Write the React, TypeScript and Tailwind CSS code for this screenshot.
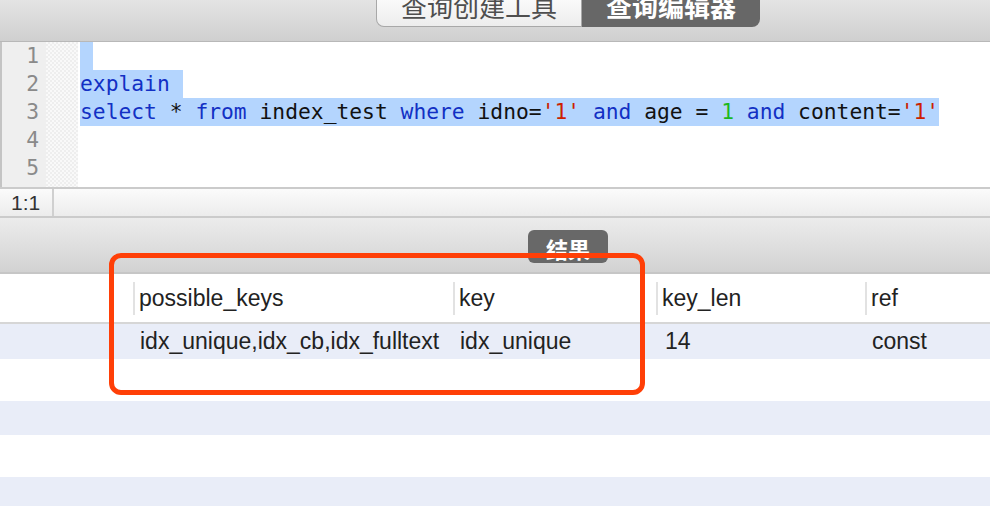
import React from "react";

const KW = "text-[#1230c4]";
const STR = "text-[#cc1f00]";
const NUM = "text-[#1db81d]";

function Line({ children }: { children?: React.ReactNode }) {
  return <div className="h-[28px] leading-[28px] whitespace-pre">{children}</div>;
}

function Sel({ children }: { children: React.ReactNode }) {
  return (
    <span className="inline-block h-[28px] leading-[28px] bg-[#b4d5fe] whitespace-pre align-top">
      {children}
    </span>
  );
}

const cols = [
  { w: "w-[133px]", h: "", v: "", pad: "pl-[7px]" },
  { w: "w-[320px]", h: "possible_keys", v: "idx_unique,idx_cb,idx_fulltext", pad: "pl-[7px]" },
  { w: "w-[203px]", h: "key", v: "idx_unique", pad: "pl-[7px]" },
  { w: "w-[209px]", h: "key_len", v: "14", pad: "pl-[9px]" },
  { w: "flex-1", h: "ref", v: "const", pad: "pl-[7px]" },
];

export default function App() {
  const ui = { fontFamily: '"Liberation Sans", Arial, sans-serif' };
  const cjk = { fontFamily: '"Noto Sans CJK SC", "Liberation Sans", sans-serif' };
  const mono = { fontFamily: '"DejaVu Sans Mono", monospace' };
  return (
    <div className="relative w-[990px] h-[506px] overflow-hidden bg-white" style={ui}>
      {/* top bar with tabs */}
      <div className="h-[42px] bg-gradient-to-b from-[#e4e4e4] to-[#cfcfcf] border-b border-[#b8b8b8] flex">
        <div className="ml-[376px] flex h-[27px]" style={cjk}>
          <div className="w-[206px] h-[27px] overflow-hidden bg-gradient-to-b from-[#fafafa] to-[#ededed] border border-t-0 border-[#a8a8a8] rounded-bl-[8px] flex justify-center">
            <span className="block text-[26px] leading-[26px] -mt-[7px] text-[#4e4e4e]">查询创建工具</span>
          </div>
          <div className="w-[178px] h-[27px] overflow-hidden bg-[#676767] rounded-br-[8px] flex justify-center">
            <span className="block text-[26px] leading-[26px] -mt-[7px] text-white font-bold">查询编辑器</span>
          </div>
        </div>
      </div>

      {/* editor */}
      <div className="h-[145px] flex overflow-hidden" style={mono}>
        <div className="w-[46px] h-[145px] overflow-hidden bg-[#efefef] border-l-2 border-[#c4c4c4] text-[#8a8a8a] text-[21.3px] text-right pr-[7px]">
          {[1, 2, 3, 4, 5].map((n) => (
            <div key={n} className="h-[28px] leading-[28px]">{n}</div>
          ))}
        </div>
        <div className="w-[32px] bg-[repeating-conic-gradient(#eeeeee_0%_25%,#f9f9f9_0%_50%)] bg-[length:4px_4px]" />
        <div className="flex-1 pl-[2px] text-[21.3px] text-[#111]">
          <Line><Sel>{" "}</Sel></Line>
          <Line><Sel><span className={KW}>explain</span>{" "}</Sel></Line>
          <Line>
            <Sel>
              <span className={KW}>select</span> * <span className={KW}>from</span> index_test{" "}
              <span className={KW}>where</span> idno=<span className={STR}>'1'</span>{" "}
              <span className={KW}>and</span> age = <span className={NUM}>1</span>{" "}
              <span className={KW}>and</span> content=<span className={STR}>'1'</span>
            </Sel>
          </Line>
          <Line />
          <Line />
        </div>
      </div>

      {/* status bar */}
      <div className="h-[31px] flex border-t-2 border-b-2 border-[#cbcbcb] bg-gradient-to-b from-[#fbfbfb] to-[#ececec]">
        <div className="w-[54px] border-r-2 border-[#d0d0d0] flex items-center pl-[11px] text-[21px] text-[#333]">1:1</div>
        <div className="flex-1" />
      </div>

      {/* results toolbar */}
      <div className="h-[56px] bg-gradient-to-b from-[#ececec] to-[#d2d2d2] border-b-2 border-[#c6c6c6] flex">
        <div className="ml-[528px] mt-[12px] w-[80px] h-[33px] rounded-[6px] bg-[#686868] flex items-center justify-center pt-[3px] text-white font-bold text-[22px]" style={cjk}>
          结果
        </div>
      </div>

      {/* table header */}
      <div className="h-[50px] flex border-b-2 border-[#d6d6d6] text-[23px] text-[#222]">
        {cols.map((c, i) => (
          <div key={i} className={`${c.w} flex items-center`}>
            {i > 0 && <div className="w-[2px] h-[33px] bg-[#e2e2e2]" />}
            {i > 0 && <span className="ml-[4px]">{c.h}</span>}
          </div>
        ))}
      </div>

      {/* rows */}
      <div className="h-[35px] flex items-center bg-[#e9edf8] text-[23px] text-[#222]">
        {cols.map((c, i) => (
          <div key={i} className={`${c.w} ${c.pad}`}>{c.v}</div>
        ))}
      </div>
      <div className="h-[42px] bg-white" />
      <div className="h-[34px] bg-[#e9edf8]" />
      <div className="h-[42px] bg-white" />
      <div className="h-[34px] bg-[#e9edf8]" />

      {/* red annotation box */}
      <div className="absolute left-[109px] top-[253px] w-[536px] h-[142px] border-[5px] border-[#ff3f07] rounded-[12px]" />
    </div>
  );
}
